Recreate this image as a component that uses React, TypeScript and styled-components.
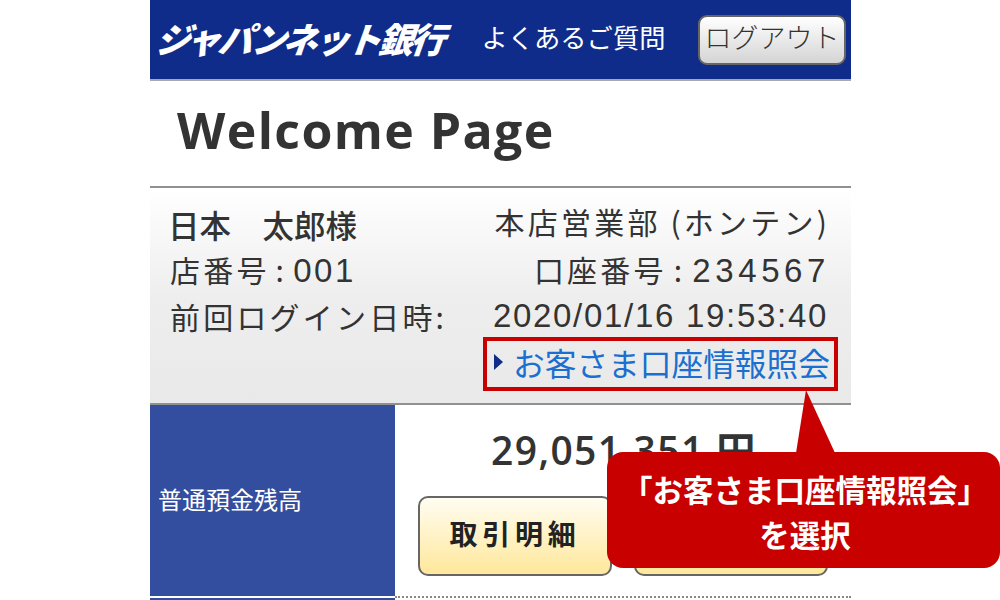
import React from "react";
import styled, { createGlobalStyle } from "styled-components";

const GlobalStyle = createGlobalStyle`
  html, body {
    margin: 0;
    padding: 0;
    background: #fff;
    font-family: "Open Sans", "Noto Sans CJK JP", sans-serif;
    color: #333;
  }
`;

const Screen = styled.div`
  position: relative;
  width: 1000px;
  height: 600px;
  overflow: hidden;
`;

const Phone = styled.div`
  width: 701px;
  margin-left: 150px;
`;

const Header = styled.header`
  height: 79px;
  background: #102c8b;
  border-bottom: 2px solid #a9a9a9;
  display: flex;
  align-items: center;
  padding: 0 5px 0 6px;
`;

const Logo = styled.div`
  font-family: "Noto Sans CJK JP", sans-serif;
  font-size: 35px;
  font-weight: 900;
  font-style: italic;
  letter-spacing: -3.1px;
  color: #fff;
  white-space: nowrap;
  padding-bottom: 4px;
  transform: skewX(-6deg);
`;

const HelpLink = styled.a`
  margin-left: 39px;
  padding-bottom: 6px;
  font-family: "Noto Sans CJK JP", sans-serif;
  font-size: 26.3px;
  font-weight: 400;
  color: #fff;
  white-space: nowrap;
`;

const LogoutButton = styled.button`
  margin-left: auto;
  width: 148px;
  height: 50px;
  padding: 0 0 6px;
  border: 2px solid #666;
  border-radius: 9px;
  background: linear-gradient(#fff, #d4d4d4);
  font-family: "Noto Sans CJK JP", sans-serif;
  font-size: 27px;
  font-weight: 300;
  color: #333;
  white-space: nowrap;
`;

const TitleBar = styled.div`
  height: 97px;
  display: flex;
  align-items: center;
  padding: 0 0 8px 27px;
  border-bottom: 2px solid #909090;
`;

const Title = styled.h1`
  margin: 0;
  font-size: 50px;
  font-weight: 700;
  letter-spacing: 1.4px;
  color: #333;
`;

const InfoPanel = styled.section`
  height: 217px;
  box-sizing: border-box;
  padding: 15px 21px 0 20px;
  background: linear-gradient(#fff, #eee 50%, #e9e9e9);
  border-bottom: 2px solid #909090;
  display: flex;
  flex-direction: column;
`;

const InfoRow = styled.div`
  height: 45px;
  display: flex;
  justify-content: space-between;
  align-items: center;
  font-family: "Noto Sans CJK JP", sans-serif;
  font-size: 30px;
  letter-spacing: 3.2px;
  font-weight: 400;
  white-space: nowrap;
`;

const Name = styled.span`
  margin: 0 0 4px -2px;
  font-size: 31.5px;
  font-weight: 500;
  letter-spacing: 0;
`;

const Branch = styled.span`
  margin-bottom: 10px;
`;

const NumberField = styled.span`
  margin-bottom: 3px;
`;

const Colon = styled.span<{ $wide?: boolean }>`
  margin: 0 ${(p) => (p.$wide ? "7px" : "6px")};
`;

const Digits = styled.span<{ $tight?: boolean }>`
  font-family: "Liberation Sans", sans-serif;
  font-size: 33px;
  letter-spacing: ${(p) => (p.$tight ? "2.6px" : "4.6px")};
`;

const DateTime = styled.span`
  margin-right: 2px;
  font-family: "Liberation Sans", sans-serif;
  font-size: 33px;
  letter-spacing: 1.7px;
`;

const DetailLink = styled.a`
  align-self: flex-end;
  margin-right: -8px;
  margin-top: -1px;
  width: 355px;
  height: 54px;
  box-sizing: border-box;
  border: 4px solid #c80000;
  display: flex;
  align-items: center;
  gap: 10px;
  padding: 0 0 4px 7px;
  font-family: "Noto Sans CJK JP", sans-serif;
  font-size: 31.7px;
  font-weight: 400;
  color: #1a6fd0;
  white-space: nowrap;
`;

const Arrow = styled.i`
  width: 0;
  height: 0;
  border-left: 9px solid #102c8b;
  border-top: 8px solid transparent;
  border-bottom: 8px solid transparent;
`;

const BalanceRow = styled.section`
  display: flex;
  height: 193px;
`;

const BalanceLabel = styled.div`
  width: 245px;
  height: 191px;
  background: #344e9f;
  display: flex;
  align-items: center;
  padding: 0 0 5px 8px;
  box-sizing: border-box;
  font-family: "Noto Sans CJK JP", sans-serif;
  font-size: 24px;
  font-weight: 400;
  color: #fff;
`;

const BalanceBody = styled.div`
  flex: 1;
  border-bottom: 2px dotted #888;
  display: flex;
  flex-direction: column;
  padding: 20px 23px 0;
`;

const Amount = styled.div`
  height: 71px;
  padding-left: 73px;
  font-size: 39px;
  font-weight: 600;
  color: #333;
  letter-spacing: 1.4px;
  line-height: 50px;
  white-space: nowrap;
`;

const Actions = styled.div`
  display: flex;
  gap: 22px;
`;

const ActionButton = styled.button`
  width: 194px;
  height: 80px;
  padding: 0 0 6px;
  border: 2px solid #666;
  border-radius: 10px;
  background: linear-gradient(#fffdf2, #ffe89b);
  font-family: "Noto Sans CJK JP", sans-serif;
  font-size: 28px;
  font-weight: 700;
  letter-spacing: 4.8px;
  color: #222;
`;

const NextRow = styled.div`
  width: 245px;
  height: 4px;
  background: #344e9f;
`;

const Callout = styled.aside`
  position: absolute;
  left: 607px;
  top: 452px;
  width: 393px;
  height: 116px;
  box-sizing: border-box;
  padding: 15px 0 0 3px;
  background: #c80000;
  border-radius: 16px;
  text-align: center;
  font-family: "Noto Sans CJK JP", sans-serif;
  font-size: 30.5px;
  font-weight: 700;
  line-height: 45px;
  color: #fff;
  white-space: nowrap;

  &::before {
    content: "";
    position: absolute;
    left: 189px;
    top: -62px;
    width: 39px;
    height: 63px;
    background: #c80000;
    clip-path: polygon(10px 0, 39px 100%, 0 100%);
  }
`;

export default function App() {
  return (
    <Screen>
      <GlobalStyle />
      <Phone>
        <Header>
          <Logo>ジャパンネット銀行</Logo>
          <HelpLink>よくあるご質問</HelpLink>
          <LogoutButton>ログアウト</LogoutButton>
        </Header>
        <TitleBar>
          <Title>Welcome Page</Title>
        </TitleBar>
        <InfoPanel>
          <InfoRow>
            <Name>日本　太郎様</Name>
            <Branch>本店営業部 (ホンテン)</Branch>
          </InfoRow>
          <InfoRow>
            <NumberField>
              店番号<Colon>:</Colon>
              <Digits $tight>001</Digits>
            </NumberField>
            <NumberField>
              口座番号<Colon $wide>:</Colon>
              <Digits>234567</Digits>
            </NumberField>
          </InfoRow>
          <InfoRow>
            <span>前回ログイン日時:</span>
            <DateTime>2020/01/16 19:53:40</DateTime>
          </InfoRow>
          <DetailLink>
            <Arrow />
            お客さま口座情報照会
          </DetailLink>
        </InfoPanel>
        <BalanceRow>
          <BalanceLabel>普通預金残高</BalanceLabel>
          <BalanceBody>
            <Amount>29,051,351 円</Amount>
            <Actions>
              <ActionButton>取引明細</ActionButton>
              <ActionButton />
            </Actions>
          </BalanceBody>
        </BalanceRow>
        <NextRow />
      </Phone>
      <Callout>
        「お客さま口座情報照会」
        <br />
        を選択
      </Callout>
    </Screen>
  );
}
